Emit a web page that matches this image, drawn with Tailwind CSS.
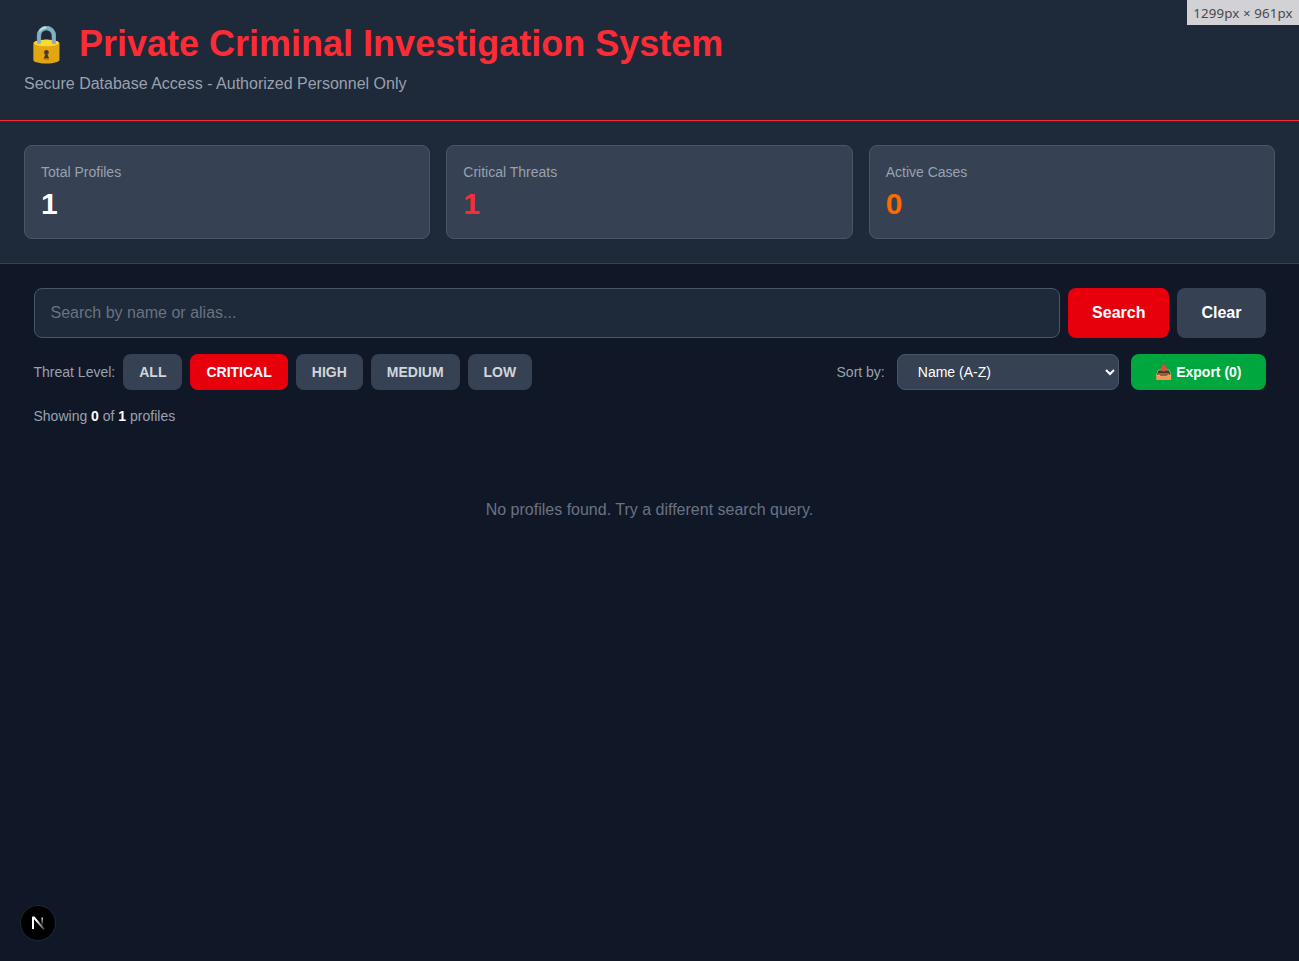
<!DOCTYPE html>
<html lang="en">
<head>
    <meta charset="UTF-8">
    <title>Private Criminal Investigation System</title>
    <script src="https://cdn.jsdelivr.net/npm/@tailwindcss/browser@4"></script>
</head>
<body class="bg-gray-900 text-white min-h-screen font-['Liberation_Sans',Arial,sans-serif]">

    <!-- Header -->
    <header class="bg-gray-800 border-b border-red-500 h-[121px] px-6 pt-6">
        <h1 class="text-4xl font-bold text-red-500">🔒 Private Criminal Investigation System</h1>
        <p class="mt-2 text-base text-gray-400">Secure Database Access - Authorized Personnel Only</p>
    </header>

    <!-- Stats -->
    <section class="bg-gray-800 border-b border-gray-700 p-6 grid grid-cols-3 gap-4">
        <div class="bg-gray-700 border border-gray-600 rounded-lg p-4">
            <p class="text-sm text-gray-400">Total Profiles</p>
            <p class="mt-1 text-3xl font-bold text-white">1</p>
        </div>
        <div class="bg-gray-700 border border-gray-600 rounded-lg p-4">
            <p class="text-sm text-gray-400">Critical Threats</p>
            <p class="mt-1 text-3xl font-bold text-red-500">1</p>
        </div>
        <div class="bg-gray-700 border border-gray-600 rounded-lg p-4">
            <p class="text-sm text-gray-400">Active Cases</p>
            <p class="mt-1 text-3xl font-bold text-orange-500">0</p>
        </div>
    </section>

    <!-- Search and filters -->
    <main class="max-w-7xl mx-auto p-6">
        <div class="flex gap-2 mb-4">
            <input type="text" placeholder="Search by name or alias..." class="flex-1 bg-gray-800 border border-gray-600 rounded-lg px-4 py-3 text-base text-white placeholder:text-gray-500">
            <button class="bg-red-600 text-white font-bold rounded-lg px-6 py-3 text-base">Search</button>
            <button class="bg-gray-700 text-white font-bold rounded-lg px-6 py-3 text-base">Clear</button>
        </div>

        <div class="flex items-center justify-between mb-4">
            <div class="flex items-center gap-2">
                <span class="text-sm text-gray-400">Threat Level:</span>
                <button class="bg-gray-700 text-gray-300 font-bold text-sm rounded-lg px-4 py-2 h-9">ALL</button>
                <button class="bg-red-600 text-white font-bold text-sm rounded-lg px-4 py-2 h-9">CRITICAL</button>
                <button class="bg-gray-700 text-gray-300 font-bold text-sm rounded-lg px-4 py-2 h-9">HIGH</button>
                <button class="bg-gray-700 text-gray-300 font-bold text-sm rounded-lg px-4 py-2 h-9">MEDIUM</button>
                <button class="bg-gray-700 text-gray-300 font-bold text-sm rounded-lg px-4 py-2 h-9">LOW</button>
            </div>
            <div class="flex items-center gap-3">
                <span class="text-sm text-gray-400">Sort by:</span>
                <select class="w-[222.5px] h-9 bg-gray-700 border border-gray-600 rounded-lg px-4 text-sm text-white">
                    <option>Name (A-Z)</option>
                </select>
                <button class="bg-green-600 text-white font-bold text-sm rounded-lg px-6 py-2 h-9">📥 Export (0)</button>
            </div>
        </div>

        <p class="text-sm text-gray-400">Showing <b class="text-white">0</b> of <b class="text-white">1</b> profiles</p>

        <p class="mt-[72px] text-center text-base text-gray-500">No profiles found. Try a different search query.</p>
    </main>

    <!-- Window size badge -->
    <div class="absolute top-0 right-0 h-[25px] w-[112px] bg-[#d1d1d6] text-[#4a4a4a] text-[13.33px] leading-[26px] text-center tracking-[0.1px] font-['Noto_Sans',sans-serif]">1299px × 961px</div>

    <!-- Next.js dev indicator -->
    <div class="fixed left-5 bottom-5 w-9 h-9 rounded-full bg-black border border-gray-800 flex items-center justify-center">
        <svg width="16" height="16" viewBox="0 0 16 16" fill="none">
            <defs>
                <linearGradient id="diag" x1="6" y1="6" x2="14" y2="15" gradientUnits="userSpaceOnUse">
                    <stop stop-color="#fff"/>
                    <stop offset="1" stop-color="#fff" stop-opacity="0.2"/>
                </linearGradient>
                <linearGradient id="stem" x1="12" y1="2" x2="12" y2="11" gradientUnits="userSpaceOnUse">
                    <stop stop-color="#fff"/>
                    <stop offset="1" stop-color="#fff" stop-opacity="0"/>
                </linearGradient>
            </defs>
            <path d="M3 14V2.8H4.2L14 14.4" stroke="url(#diag)" stroke-width="1.9"/>
            <path d="M3 14V2.8H4.6" stroke="#fff" stroke-width="1.9"/>
            <path d="M12.2 2.5V11" stroke="url(#stem)" stroke-width="1.4"/>
        </svg>
    </div>

</body>
</html>
